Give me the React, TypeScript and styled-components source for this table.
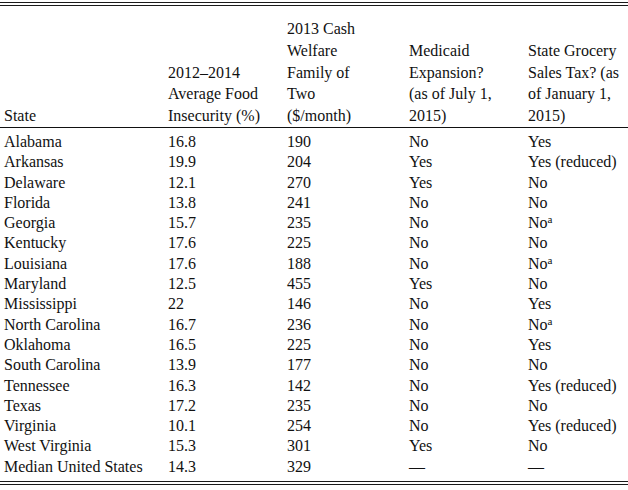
import React from "react"
import styled, { createGlobalStyle } from "styled-components"

const GlobalStyle = createGlobalStyle`
  html, body {
    margin: 0;
    padding: 0;
    background: #fff;
  }
`

const Page = styled.div`
  width: 628px;
  height: 490px;
  padding-top: 2px;
  box-sizing: border-box;
  font-family: "Liberation Serif", "Times New Roman", serif;
  font-size: 16px;
  color: #111;
`

const DoubleRule = styled.div`
  height: 2px;
  border-top: 1.5px solid #1a1a1a;
  border-bottom: 1.5px solid #1a1a1a;
`

const Grid = styled.div`
  display: grid;
  grid-template-columns: 164px 119px 122px 119px 1fr;
  padding-left: 4px;
`

const Head = styled(Grid)`
  padding-top: 12px;
  padding-bottom: 0;
  border-bottom: 1px solid #111;
  align-items: end;
`

const HeadCell = styled.div`
  line-height: 21.8px;
`

const Body = styled.div`
  padding: 4px 0 4px;
`

const Row = styled(Grid)`
  line-height: 20.3px;
`

const Cell = styled.div`
  white-space: nowrap;
`

const Note = styled.sup`
  font-size: 11px;
  line-height: 0;
  vertical-align: 5px;
`

type Item = [string, string, string, string, string, boolean?]

const rows: Item[] = [
  ["Alabama", "16.8", "190", "No", "Yes"],
  ["Arkansas", "19.9", "204", "Yes", "Yes (reduced)"],
  ["Delaware", "12.1", "270", "Yes", "No"],
  ["Florida", "13.8", "241", "No", "No"],
  ["Georgia", "15.7", "235", "No", "No", true],
  ["Kentucky", "17.6", "225", "No", "No"],
  ["Louisiana", "17.6", "188", "No", "No", true],
  ["Maryland", "12.5", "455", "Yes", "No"],
  ["Mississippi", "22", "146", "No", "Yes"],
  ["North Carolina", "16.7", "236", "No", "No", true],
  ["Oklahoma", "16.5", "225", "No", "Yes"],
  ["South Carolina", "13.9", "177", "No", "No"],
  ["Tennessee", "16.3", "142", "No", "Yes (reduced)"],
  ["Texas", "17.2", "235", "No", "No"],
  ["Virginia", "10.1", "254", "No", "Yes (reduced)"],
  ["West Virginia", "15.3", "301", "Yes", "No"],
  ["Median United States", "14.3", "329", "—", "—"],
]

const App = () => {
  return (
    <Page>
      <GlobalStyle />
      <DoubleRule />
      <Head>
        <HeadCell>State</HeadCell>
        <HeadCell>
          2012–2014
          <br />
          Average Food
          <br />
          Insecurity (%)
        </HeadCell>
        <HeadCell>
          2013 Cash
          <br />
          Welfare
          <br />
          Family of
          <br />
          Two
          <br />
          ($/month)
        </HeadCell>
        <HeadCell>
          Medicaid
          <br />
          Expansion?
          <br />
          (as of July 1,
          <br />
          2015)
        </HeadCell>
        <HeadCell>
          State Grocery
          <br />
          Sales Tax? (as
          <br />
          of January 1,
          <br />
          2015)
        </HeadCell>
      </Head>
      <Body>
        {rows.map(([state, food, cash, medicaid, tax, note]) => (
          <Row key={state}>
            <Cell>{state}</Cell>
            <Cell>{food}</Cell>
            <Cell>{cash}</Cell>
            <Cell>{medicaid}</Cell>
            <Cell>
              {tax}
              {note && <Note>a</Note>}
            </Cell>
          </Row>
        ))}
      </Body>
      <DoubleRule />
    </Page>
  )
}

export default App
